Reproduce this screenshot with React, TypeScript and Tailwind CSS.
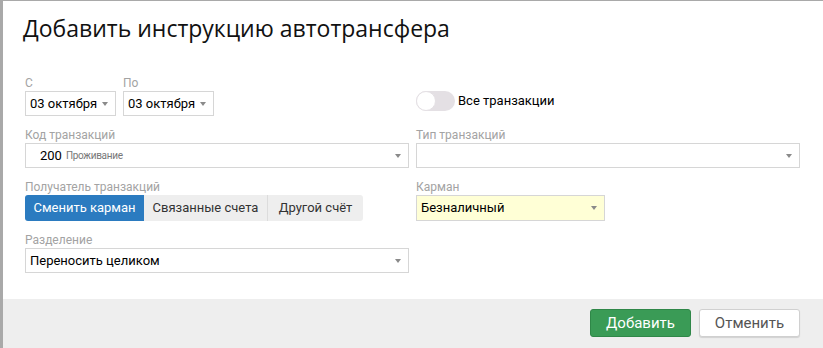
import React from 'react';

const labelCls = "block h-4 text-[12px] leading-4 text-[#a3a3a3]";

function Caret() {
  return <span className="ml-auto h-0 w-0 shrink-0 border-x-[3.5px] border-t-[4px] border-x-transparent border-t-[#8a8a8a]" />;
}

function Select({ children, className = "" }: { children?: React.ReactNode; className?: string }) {
  return (
    <div className={`flex h-[25px] items-center whitespace-nowrap border border-[#d6d6d6] pl-[4px] pr-[7px] text-[13px] text-black ${className}`}>
      {children}
      <Caret />
    </div>
  );
}

export default function App() {
  return (
    <div className="h-[348px] w-[823px] bg-[#a9a9a9] pl-[3px] pt-[1px]" style={{ fontFamily: 'Roboto, "Noto Sans", sans-serif' }}>
      <div className="flex h-full flex-col bg-white">
        <h1 className="pl-[20px] pt-[12px] text-[23px] leading-[30px] text-[#111]" style={{ fontFamily: '"Open Sans", "Noto Sans", sans-serif' }}>
          Добавить инструкцию автотрансфера
        </h1>

        <div className="grid flex-1 grid-cols-[384px_384px] content-start gap-x-[7px] gap-y-[11px] pl-[22px] pt-[32px]">
          {/* row 1 */}
          <div className="flex gap-[7px]">
            <div>
              <span className={labelCls}>С</span>
              <Select className="w-[91px] pl-[2px]">03 октября</Select>
            </div>
            <div>
              <span className={labelCls}>По</span>
              <Select className="w-[91px] pl-[2px]">03 октября</Select>
            </div>
          </div>
          <div className="pt-[16px]">
            <div className="flex h-[20px] items-center gap-[3px]">
              <div className="flex h-[20px] w-[39px] items-center rounded-full bg-[#e4e0e4]">
                <div className="h-[20px] w-[20px] rounded-full border border-[#e4e0e4] bg-white" />
              </div>
              <span className="text-[13px] text-black">Все транзакции</span>
            </div>
          </div>

          {/* row 2 */}
          <div>
            <span className={labelCls}>Код транзакций</span>
            <Select className="pl-[14px]">
              <span>200</span>
              <span className="ml-[4px] text-[10px] tracking-[-0.3px] text-[#777]">Проживание</span>
            </Select>
          </div>
          <div>
            <span className={labelCls}>Тип транзакций</span>
            <Select />
          </div>

          {/* row 3 */}
          <div>
            <span className={labelCls}>Получатель транзакций</span>
            <div className="flex h-[26px] w-[338px] whitespace-nowrap text-[13px]">
              <button className="w-[119px] rounded-l-[3px] bg-[#2b7bc0] text-white">Сменить карман</button>
              <button className="w-[124px] border-r border-[#dcdcdc] bg-[#eeeeee] text-[#333]">Связанные счета</button>
              <button className="w-[95px] rounded-r-[3px] bg-[#eeeeee] text-[#333]">Другой счёт</button>
            </div>
          </div>
          <div>
            <span className={labelCls}>Карман</span>
            <Select className="h-[26px] w-[189px] border-[#b3b3b3] bg-[#ffffd6] pl-[3px]">Безналичный</Select>
          </div>

          {/* row 4 */}
          <div>
            <span className={labelCls}>Разделение</span>
            <Select className="pl-[3px]">Переносить целиком</Select>
          </div>
          <div />
        </div>

        <div className="flex h-[49px] items-start justify-end gap-[8px] bg-[#eeeeee] pr-[23px] pt-[10px]">
          <button className="h-[28px] w-[101px] rounded-[3px] border border-[#2f8748] bg-[#3a9b56] text-[15px] text-white">
            Добавить
          </button>
          <button className="h-[28px] w-[101px] rounded-[3px] border border-[#d0d0d0] bg-white text-[15px] text-[#555] shadow-[0_1px_1px_rgba(0,0,0,0.12)]">
            Отменить
          </button>
        </div>
      </div>
    </div>
  );
}
